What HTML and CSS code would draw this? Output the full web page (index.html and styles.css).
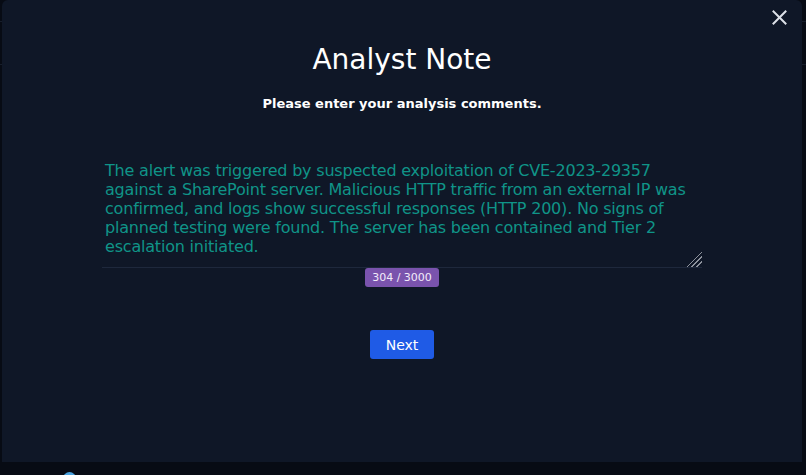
FILE: index.html
```html
<!DOCTYPE html>
<html lang="en">
<head>
<meta charset="utf-8">
<title>Analyst Note</title>
<link rel="stylesheet" href="styles.css">
</head>
<body>
<div class="app">
  <div class="app-bar"></div>
  <div class="app-toolbar"></div>
  <div class="app-main"></div>
  <div class="app-dock"><span class="dock-icon"></span></div>
</div>

<div class="modal" role="dialog" aria-labelledby="note-title">
  <button class="modal-close" aria-label="Close">
    <svg width="15" height="15" viewBox="0 0 15 15" aria-hidden="true">
      <path d="M1.5 1.5 L13.5 13.5 M13.5 1.5 L1.5 13.5" stroke="currentColor" stroke-width="2" stroke-linecap="square" fill="none"/>
    </svg>
  </button>
  <h1 class="modal-title" id="note-title">Analyst Note</h1>
  <p class="modal-subtitle">Please enter your analysis comments.</p>
  <textarea class="note-input" aria-label="Analysis comments">The alert was triggered by suspected exploitation of CVE-2023-29357
against a SharePoint server. Malicious HTTP traffic from an external IP was
confirmed, and logs show successful responses (HTTP 200). No signs of
planned testing were found. The server has been contained and Tier 2
escalation initiated.</textarea>
  <span class="char-count">304 / 3000</span>
  <button class="btn-next">Next</button>
</div>
</body>
</html>
```
FILE: styles.css
```css
* { box-sizing: border-box; }

html, body {
  margin: 0;
  padding: 0;
  height: 100%;
}

body {
  background: #070b14;
  font-family: "DejaVu Sans", "Liberation Sans", sans-serif;
  overflow: hidden;
}

.app {
  height: 100vh;
  display: flex;
  flex-direction: column;
}

.app-bar {
  height: 22px;
  border-bottom: 1px solid #171e2b;
}

.app-toolbar {
  height: 43px;
  border-bottom: 1px solid #171e2b;
}

.app-main {
  flex: 1;
}

.app-dock {
  height: 3px;
  overflow: hidden;
  padding-left: 63px;
}

.dock-icon {
  display: block;
  width: 13px;
  height: 13px;
  border-radius: 50%;
  background: #4aa3e0;
}

.modal {
  position: fixed;
  left: 2px;
  top: 0;
  width: 800px;
  height: 462px;
  background: #0f1727;
  border-radius: 6px 6px 0 0;
  display: flex;
  flex-direction: column;
  align-items: center;
  padding-top: 43px;
}

.modal-close {
  position: absolute;
  top: 10px;
  right: 15px;
  width: 15px;
  height: 15px;
  padding: 0;
  border: none;
  background: none;
  color: #dde1e8;
  cursor: pointer;
  display: flex;
}

.modal-title {
  margin: 0;
  font-size: 28px;
  line-height: 34px;
  font-weight: 400;
  color: #ffffff;
}

.modal-subtitle {
  margin: 19px 0 0;
  font-size: 13px;
  line-height: 16px;
  font-weight: 700;
  color: #ffffff;
}

.note-input {
  display: block;
  margin-top: 45px;
  width: 600px;
  height: 111px;
  padding: 4px 3px 0;
  background: transparent;
  border: none;
  border-bottom: 1px solid #1e283c;
  color: #0f9488;
  font-family: "DejaVu Sans", "Liberation Sans", sans-serif;
  font-size: 16px;
  letter-spacing: -0.2px;
  line-height: 19px;
  white-space: pre;
  overflow: hidden;
  resize: vertical;
  outline: none;
}

.note-input::-webkit-scrollbar {
  width: 14px;
  height: 14px;
  background: transparent;
}

.note-input::-webkit-resizer {
  background: linear-gradient(135deg,
    transparent 0 47%,
    #8d929c 47% 53%,
    transparent 53% 63%,
    #8d929c 63% 69%,
    transparent 69% 79%,
    #8d929c 79% 85%,
    transparent 85%);
}

.char-count {
  display: block;
  margin-top: 0;
  padding: 3px 7px;
  background: #7a53ad;
  color: #f2ecfa;
  font-size: 11px;
  line-height: 13px;
  border-radius: 3px;
}

.btn-next {
  margin-top: 43px;
  height: 29px;
  padding: 0 16px;
  border: none;
  border-radius: 3px;
  background: #1f5be6;
  color: #ffffff;
  font-family: "DejaVu Sans", "Liberation Sans", sans-serif;
  font-size: 14px;
  cursor: pointer;
}
```
